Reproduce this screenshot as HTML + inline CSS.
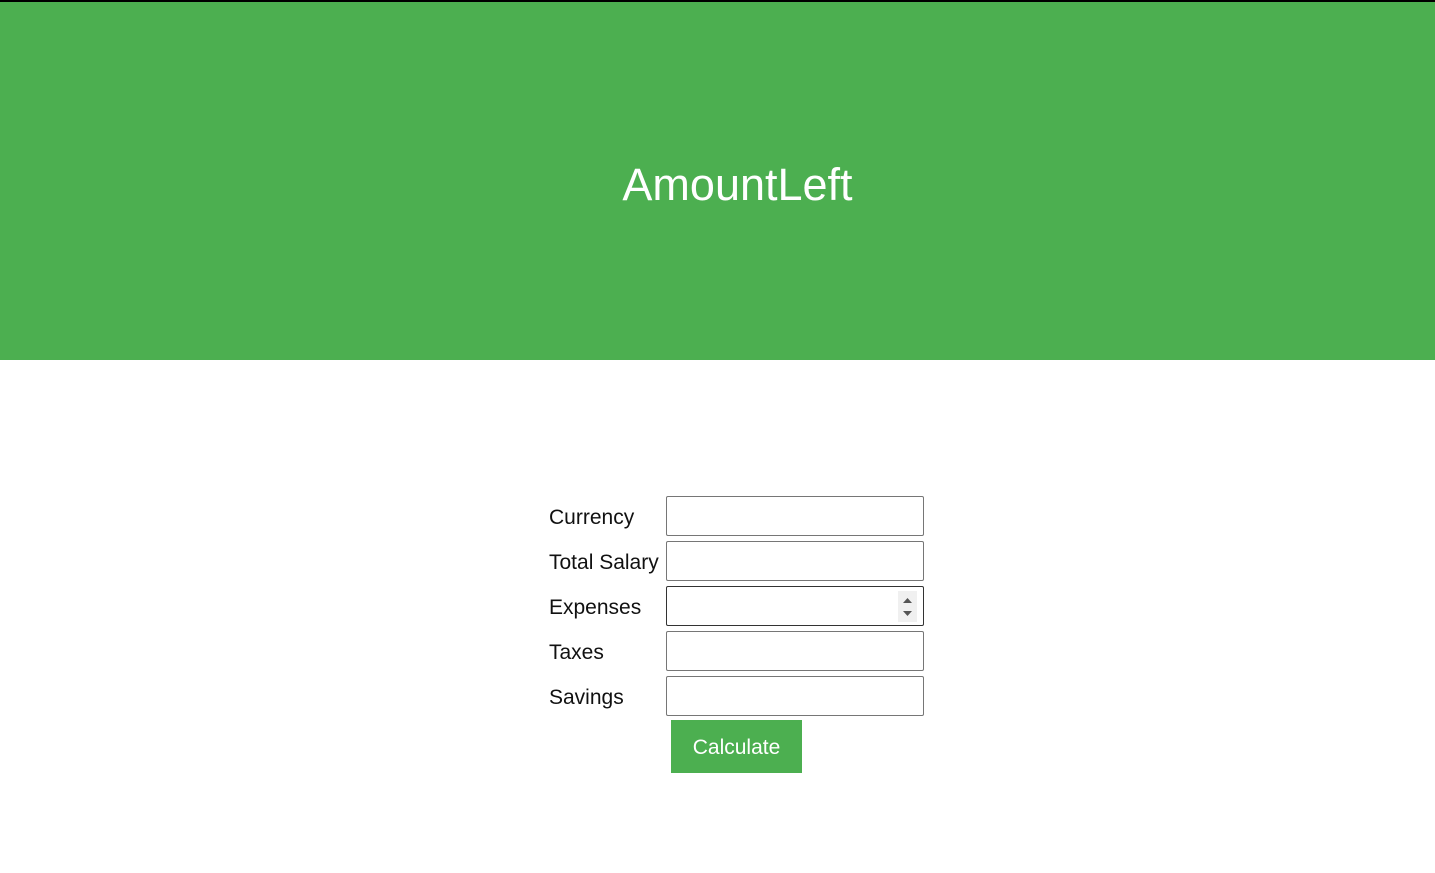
<!DOCTYPE html>
<html><head><style>
body{margin:0;background:#fff;font-family:"Liberation Sans",sans-serif;}
.top{height:2px;background:#000;}
.hdr{position:absolute;top:2px;left:0;width:1435px;height:358px;background:#4CAF50;}
.hdr h1{position:absolute;top:155px;left:20px;width:1435px;text-align:center;margin:0;font-weight:normal;font-size:45px;color:#fff;line-height:56px;}
.lbl{position:absolute;left:549px;font-size:21px;color:#111;line-height:24px;}
.in{position:absolute;left:666px;width:256px;height:38px;border:1px solid #767676;border-radius:2px;background:#fff;}
.spin{position:absolute;right:6px;top:4px;width:19px;height:31px;background:#f0f0f0;}
.btn{position:absolute;left:671px;top:720px;width:131px;height:53px;background:#4CAF50;color:#fff;font-size:21px;text-align:center;line-height:55px;}
</style></head><body>
<div class="top"></div>
<div class="hdr"><h1>AmountLeft</h1></div>
<div class="lbl" style="top:506px">Currency</div>
<div class="lbl" style="top:551px">Total Salary</div>
<div class="lbl" style="top:596px">Expenses</div>
<div class="lbl" style="top:641px">Taxes</div>
<div class="lbl" style="top:686px">Savings</div>
<div class="in" style="top:496px"></div>
<div class="in" style="top:541px"></div>
<div class="in" style="top:586px;border-color:#333"><div class="spin"><svg width="19" height="31"><path d="M5 12 L9.5 7 L14 12Z M5 20 L9.5 25 L14 20Z" fill="#555"/></svg></div></div>
<div class="in" style="top:631px"></div>
<div class="in" style="top:676px"></div>
<div class="btn">Calculate</div>
</body></html>
